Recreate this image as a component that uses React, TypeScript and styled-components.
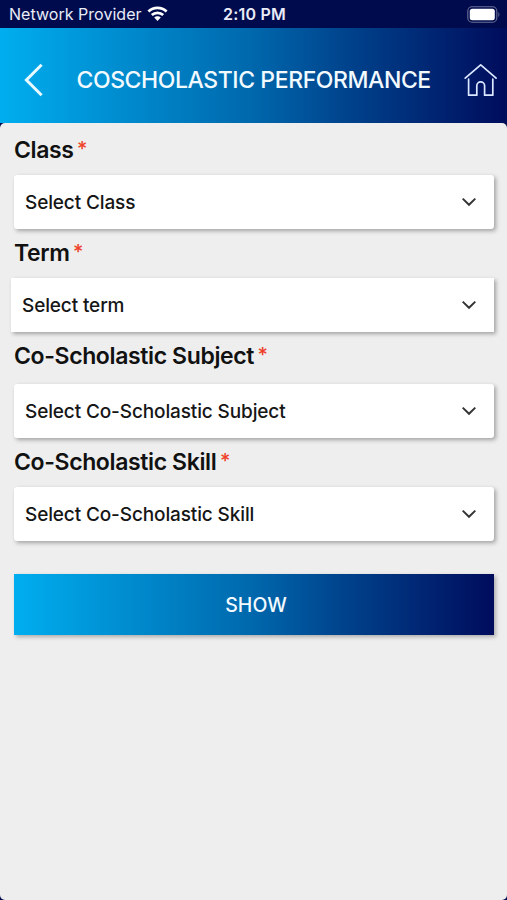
import React from "react";
import styled, { createGlobalStyle } from "styled-components";

const GlobalStyle = createGlobalStyle`
  * { box-sizing: border-box; }
  body { margin: 0; background: #010a4a; font-family: Inter, "Liberation Sans", sans-serif; }
  button { font-family: inherit; border: 0; padding: 0; background: none; }
`;

const blueGradient = "linear-gradient(90deg, #00aeef 0%, #0067ac 50%, #00408a 70%, #000c5c 100%)";

const Screen = styled.div`
  width: 507px;
  height: 900px;
  display: flex;
  flex-direction: column;
  overflow: hidden;
  background: #010a4a;
`;

const StatusBar = styled.div`
  height: 28px;
  flex: none;
  display: grid;
  grid-template-columns: 1fr auto 1fr;
  align-items: center;
  padding: 0 7px 0 9px;
  background: #000b4d;
  color: #e9ebf8;
  font-size: 16px;
`;

const Carrier = styled.div`
  display: flex;
  align-items: center;
  gap: 5px;
  letter-spacing: 0.03px;
  white-space: nowrap;
`;

const Clock = styled.div`
  font-weight: 600;
  font-size: 16px;
  letter-spacing: 0.2px;
`;

const BatterySlot = styled.div`
  display: flex;
  justify-content: flex-end;
`;

const Header = styled.header`
  height: 95px;
  flex: none;
  display: flex;
  align-items: center;
  padding: 9px 8px 0 22px;
  background: ${blueGradient};
`;

const IconButton = styled.button`
  display: flex;
  flex: none;
`;

const Title = styled.h1`
  margin: 0 auto 0 29.5px;
  color: #f2faff;
  font-size: 23px;
  font-weight: 550;
  line-height: 30px;
  letter-spacing: -0.42px;
  white-space: nowrap;
`;

const Panel = styled.main`
  flex: 1;
  padding: 9px 13px 0 14px;
  border-radius: 5px;
  background: #eee;
`;

const Field = styled.section<{ $height: number }>`
  height: ${(p) => p.$height}px;
  display: flex;
  flex-direction: column;
`;

const Label = styled.label<{ $gap: number }>`
  height: 36px;
  flex: none;
  display: flex;
  margin-bottom: ${(p) => p.$gap}px;
  color: #111;
  font-size: 23px;
  font-weight: 570;
  line-height: 36px;
  letter-spacing: -0.37px;
  white-space: nowrap;
`;

const Required = styled.span`
  margin-left: 3.5px;
  color: #ef4129;
  font-size: 20px;
  font-weight: 500;
  line-height: 34px;
`;

const Select = styled.button<{ $wide?: boolean }>`
  height: 54px;
  flex: none;
  display: flex;
  align-items: center;
  justify-content: space-between;
  margin-left: ${(p) => (p.$wide ? -3 : 0)}px;
  padding: 0 16px 0 11px;
  border-radius: ${(p) => (p.$wide ? 0 : 3)}px;
  background: #fff;
  box-shadow: 2px 2px 4px rgba(0, 0, 0, 0.32);
  color: #161616;
  font-size: 19px;
  font-weight: 500;
  letter-spacing: -0.13px;
  white-space: nowrap;
`;

const ShowButton = styled.button`
  width: 480px;
  height: 61px;
  display: block;
  background: ${blueGradient};
  box-shadow: 2px 2px 4px rgba(0, 0, 0, 0.28);
  color: #f2faff;
  font-size: 19.5px;
  font-weight: 550;
  padding: 1px 0 0 4px;
`;

const fields = [
  { label: "Class", placeholder: "Select Class", height: 103, gap: 7 },
  { label: "Term", placeholder: "Select term", height: 103, gap: 7, wide: true },
  { label: "Co-Scholastic Subject", placeholder: "Select Co-Scholastic Subject", height: 106, gap: 10 },
  { label: "Co-Scholastic Skill", placeholder: "Select Co-Scholastic Skill", height: 130, gap: 7 },
];

const Wifi = () => (
  <svg width="21" height="16" viewBox="0 0 21 16" fill="none" stroke="#fff" strokeWidth="2.8">
    <path d="M1.4 5.5C6.6.6 14.4.6 19.6 5.5" />
    <path d="M4.8 9C8 6.1 13 6.1 16.2 9" />
    <path d="M7.2 11.6C9 9.8 12 9.8 13.8 11.6L10.5 15z" fill="#fff" stroke="none" />
  </svg>
);

const Battery = () => (
  <svg width="33" height="17" viewBox="0 0 33 17">
    <rect x="0.8" y="0.8" width="29" height="15.4" rx="4.2" fill="none" stroke="#6a6f96" strokeWidth="1.1" />
    <rect x="2.8" y="2.8" width="25" height="11.4" rx="2.5" fill="#fff" />
    <path d="M31.4 6c1.3.7 1.3 4.3 0 5z" fill="#6a6f96" />
  </svg>
);

const Back = () => (
  <svg width="25" height="36" viewBox="0 0 25 36" fill="none" stroke="#e8faff" strokeWidth="3">
    <path d="M19.6 2.8 4.4 18 19.6 33.2" />
  </svg>
);

const Home = () => (
  <svg width="36" height="36" viewBox="0 0 36 36" fill="none" stroke="#dce8ff" strokeWidth="1.7" strokeLinejoin="round" strokeLinecap="round">
    <path d="M2.2 16.2 17.7 2.8 33.1 16.2" />
    <path d="M5.6 17.2v16h8.2V23.8a3.9 3.9 0 0 1 7.8 0v9.4h8.2v-16" />
  </svg>
);

const Chevron = () => (
  <svg width="18" height="12" viewBox="0 0 18 12" fill="none" stroke="#333" strokeWidth="1.9">
    <path d="M2.7 2.6 9 8.8 15.3 2.6" />
  </svg>
);

export default function App() {
  return (
    <>
      <GlobalStyle />
      <Screen>
        <StatusBar>
          <Carrier>
            Network Provider
            <Wifi />
          </Carrier>
          <Clock>2:10 PM</Clock>
          <BatterySlot>
            <Battery />
          </BatterySlot>
        </StatusBar>
        <Header>
          <IconButton aria-label="Back">
            <Back />
          </IconButton>
          <Title>COSCHOLASTIC PERFORMANCE</Title>
          <IconButton aria-label="Home">
            <Home />
          </IconButton>
        </Header>
        <Panel>
          {fields.map((f) => (
            <Field key={f.label} $height={f.height}>
              <Label $gap={f.gap}>
                {f.label}
                <Required>*</Required>
              </Label>
              <Select $wide={f.wide}>
                {f.placeholder}
                <Chevron />
              </Select>
            </Field>
          ))}
          <ShowButton>SHOW</ShowButton>
        </Panel>
      </Screen>
    </>
  );
}
